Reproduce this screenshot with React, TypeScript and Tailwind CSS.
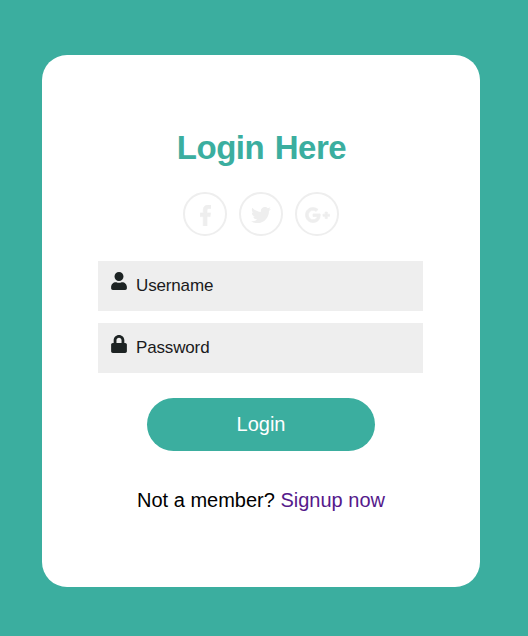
import React from "react";
import { FaTwitter, FaGooglePlusG, FaUser, FaLock } from "react-icons/fa";

function FacebookF() {
  return (
    <svg viewBox="0 0 264 512" fill="currentColor" stroke="currentColor" strokeWidth="14" className="ml-px h-[21px] w-[11px]">
      <path d="M76.7 512V283H0v-91h76.7v-71.7C76.7 42.4 124.3 0 193.8 0c33.3 0 61.9 2.5 70.2 3.6V85h-48.2c-37.8 0-45.1 18-45.1 44.3V192H256l-11.7 91h-73.6v229" />
    </svg>
  );
}

function Social({ children }: { children: React.ReactNode }) {
  return (
    <a className="flex size-[44px] items-center justify-center rounded-full border-2 border-[#eeeeee] pt-[2px] text-[#eeeeee]">
      {children}
    </a>
  );
}

function Field({ icon, label }: { icon: React.ReactNode; label: string }) {
  return (
    <label className="flex h-[50px] w-[325px] bg-[#eeeeee] pt-[11px] pl-[12px] text-[#1d2323]">
      {icon}
      <span className="ml-[8px] text-[17px] leading-[27px] tracking-[-0.15px] text-[#1a1a20]">{label}</span>
    </label>
  );
}

export default function App() {
  return (
    <main className="h-[636px] w-[528px] bg-[#3bae9f] pt-[55px] pl-[42px] font-['Liberation_Sans',Arial,sans-serif]">
      <section className="h-[532px] w-[438px] rounded-[25px] bg-white pt-[73px] pl-[56px]">
        <div className="flex w-[325px] flex-col items-center">
          <h1 className="pl-[2px] text-[33px] leading-[40px] font-bold tracking-[-0.5px] [word-spacing:2px] text-[#3bae9f]">Login Here</h1>
          <div className="mt-[24px] flex gap-[12px]">
            <Social><FacebookF /></Social>
            <Social><FaTwitter className="size-[20px]" /></Social>
            <Social><FaGooglePlusG className="ml-px h-[20px] w-[25px] stroke-current [stroke-width:18px]" /></Social>
          </div>
          <form className="mt-[25px] flex flex-col gap-[12px]">
            <Field icon={<FaUser className="size-[18px]" />} label="Username" />
            <Field icon={<FaLock className="mt-px size-[18px]" />} label="Password" />
          </form>
          <button className="mt-[25px] h-[53px] w-[228px] rounded-full bg-[#3bae9f] pb-[2px] pl-px text-[20px] text-white">Login</button>
          <p className="mt-[34px] pl-px text-[20px] leading-[30px] whitespace-nowrap text-black">
            Not a member? <a className="text-[#551a8b]">Signup now</a>
          </p>
        </div>
      </section>
    </main>
  );
}
